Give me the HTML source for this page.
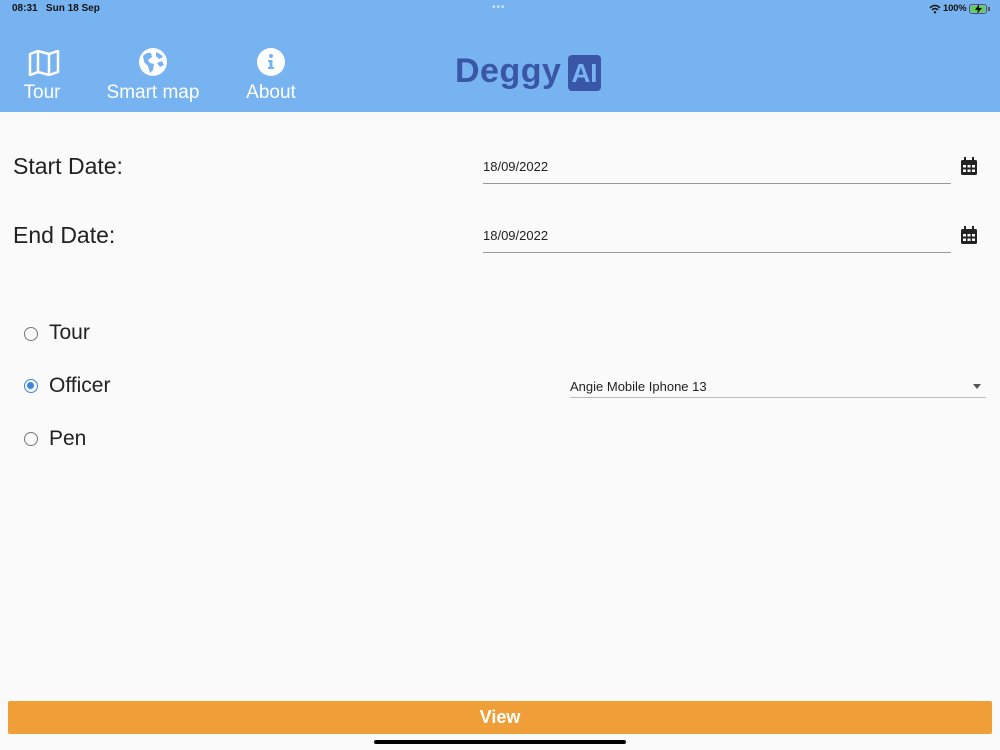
<!DOCTYPE html>
<html><head><meta charset="utf-8"><style>
*{margin:0;padding:0;box-sizing:border-box}
body{width:1000px;height:750px;background:#fafafa;font-family:"Liberation Sans",sans-serif;position:relative;overflow:hidden}
.hdr{position:absolute;left:0;top:0;width:1000px;height:112px;background:#77b3f1}
.abs{position:absolute}
.nav{color:#fff;font-size:19px;text-align:center}
.lbl{font-size:23px;color:#222}
.rl{font-size:21px;color:#222}
.field{position:absolute;border-bottom:1px solid #999;font-size:13px;color:#222;padding-top:2px}
.radio{position:absolute;width:14px;height:14px;border:1.6px solid #777;border-radius:50%}
</style></head><body>
<div class="hdr"></div>
<div class="abs" style="left:12px;top:3px;font-size:10px;font-weight:bold;color:#111">08:31&nbsp;&nbsp; Sun 18 Sep</div>
<div class="abs" style="left:492px;top:2px;font-size:10px;color:#cfe3fa;letter-spacing:1px">•••</div>
<svg class="abs" style="left:929px;top:4px" width="12" height="10" viewBox="0 0 12 10"><path d="M1 4 Q6 -1 11 4" stroke="#111" stroke-width="1.5" fill="none"/><path d="M3 6 Q6 3 9 6" stroke="#111" stroke-width="1.5" fill="none"/><circle cx="6" cy="8.3" r="1.2" fill="#111"/></svg>
<div class="abs" style="left:943px;top:3px;font-size:9.5px;font-weight:bold;color:#111;letter-spacing:-0.2px">100%</div>
<div class="abs" style="left:969px;top:4px;width:18px;height:10px;border:1px solid #555;border-radius:3px;padding:1px"><div style="width:100%;height:100%;background:#5fcf4e;border-radius:1px"></div></div>
<div class="abs" style="left:988px;top:7px;width:2px;height:4px;background:#555"></div>
<svg class="abs" style="left:975px;top:4px" width="7" height="10" viewBox="0 0 7 10"><path d="M4 0 L0 6 H3 L2 10 L7 4 H4 Z" fill="#111"/></svg>

<svg class="abs" style="left:28px;top:50px" width="32" height="26" viewBox="0 0 32 26"><path d="M2 4 L10 1 L21 4 L30 1 V22 L21 25 L10 22 L2 25 Z M10 1 V22 M21 4 V25" stroke="#fff" stroke-width="2.5" fill="none" stroke-linejoin="round"/></svg>
<div class="abs nav" style="left:12px;top:82px;width:60px">Tour</div>
<svg class="abs" style="left:139px;top:48px" width="28" height="28" viewBox="0 0 28 28"><circle cx="14" cy="14" r="14" fill="#fff"/><path d="M4 8 Q8 4 12 5 L13 9 L9 12 L11 15 L15 16 L14 22 L11 25 L9 18 L5 14 Z M17 4 Q22 6 24 9 L20 11 L17 8 Z M18 15 L23 13 L25 17 L21 19 Z" fill="#77b3f1"/></svg>
<div class="abs nav" style="left:93px;top:82px;width:120px">Smart map</div>
<svg class="abs" style="left:257px;top:48px" width="28" height="28" viewBox="0 0 28 28"><circle cx="14" cy="14" r="14" fill="#fff"/><circle cx="14" cy="8" r="2" fill="#77b3f1"/><path d="M11 12 H15.5 V19 H17 V21 H11 V19 H12.5 V14 H11 Z" fill="#77b3f1"/></svg>
<div class="abs nav" style="left:236px;top:82px;width:70px">About</div>

<div class="abs" style="left:455px;top:52px;font-size:34px;font-weight:bold;color:#3a56a6;letter-spacing:0.5px">Deggy</div>
<div class="abs" style="left:568px;top:55px;width:33px;height:36px;background:#3a56a6;border-radius:4px;color:#77b3f1;font-size:26px;font-weight:bold;text-align:center;line-height:36px">AI</div>

<div class="abs lbl" style="left:13px;top:153px">Start Date:</div>
<div class="field" style="left:483px;top:157px;width:468px;height:27px">18/09/2022</div>
<div class="abs lbl" style="left:13px;top:222px">End Date:</div>
<div class="field" style="left:483px;top:226px;width:468px;height:27px">18/09/2022</div>
<svg class="abs" style="left:961px;top:157px" width="16" height="18" viewBox="0 0 16 18"><rect x="0" y="3" width="16" height="15" rx="1.5" fill="#222"/><rect x="3" y="0" width="2" height="4" fill="#222"/><rect x="11" y="0" width="2" height="4" fill="#222"/><g fill="#fafafa"><rect x="2" y="8" width="3" height="2.5"/><rect x="6.5" y="8" width="3" height="2.5"/><rect x="11" y="8" width="3" height="2.5"/><rect x="2" y="12.5" width="3" height="2.5"/><rect x="6.5" y="12.5" width="3" height="2.5"/><rect x="11" y="12.5" width="3" height="2.5"/></g></svg>
<svg class="abs" style="left:961px;top:226px" width="16" height="18" viewBox="0 0 16 18"><rect x="0" y="3" width="16" height="15" rx="1.5" fill="#222"/><rect x="3" y="0" width="2" height="4" fill="#222"/><rect x="11" y="0" width="2" height="4" fill="#222"/><g fill="#fafafa"><rect x="2" y="8" width="3" height="2.5"/><rect x="6.5" y="8" width="3" height="2.5"/><rect x="11" y="8" width="3" height="2.5"/><rect x="2" y="12.5" width="3" height="2.5"/><rect x="6.5" y="12.5" width="3" height="2.5"/><rect x="11" y="12.5" width="3" height="2.5"/></g></svg>

<div class="radio" style="left:24px;top:327px"></div>
<div class="abs rl" style="left:49px;top:321px">Tour</div>
<div class="radio" style="left:24px;top:379px;border-color:#3d86e0"><div style="width:7px;height:7px;margin:2px;background:#3d86e0;border-radius:50%"></div></div>
<div class="abs rl" style="left:49px;top:374px">Officer</div>
<div class="radio" style="left:24px;top:432px"></div>
<div class="abs rl" style="left:49px;top:427px">Pen</div>

<div class="field" style="left:570px;top:377px;width:416px;height:21px;border-color:#bbb">Angie Mobile Iphone 13</div>
<div class="abs" style="left:973px;top:384px;width:0;height:0;border-left:4.5px solid transparent;border-right:4.5px solid transparent;border-top:5px solid #555"></div>

<div class="abs" style="left:8px;top:701px;width:984px;height:33px;background:#f09e38;border-radius:2px;color:#fff;font-size:18px;font-weight:bold;text-align:center;line-height:33px">View</div>
<div class="abs" style="left:374px;top:740px;width:252px;height:4px;background:#000;border-radius:2px"></div>
</body></html>
